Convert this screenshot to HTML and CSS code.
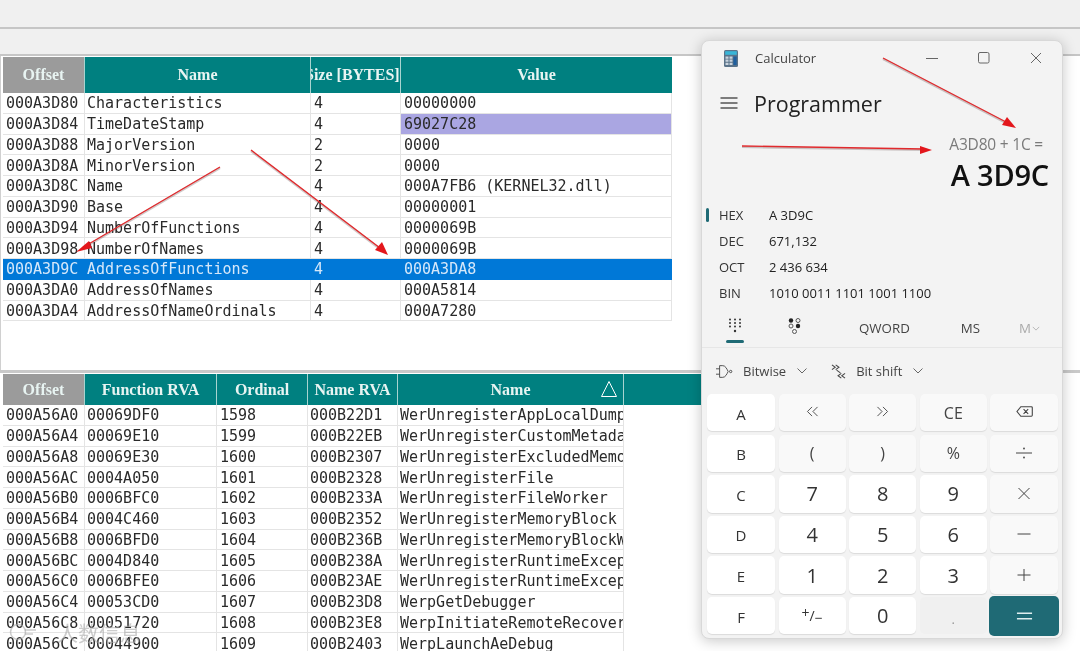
FILE: index.html
```html
<!DOCTYPE html>
<html lang="en">
<head>
<meta charset="utf-8">
<title>Export directory and Calculator</title>
<link rel="stylesheet" href="styles.css">
</head>
<body>
<div class="stage">
  <div class="bar bar-top"></div>
  <div class="bar bar-sub"></div>

  <section class="pane pane-upper">
    <table class="grid grid-upper">
      <colgroup><col class="c-off"><col class="c-name"><col class="c-size"><col class="c-val"></colgroup>
      <thead><tr><th class="th-off">Offset</th><th>Name</th><th class="th-clip"><span>Size [BYTES]</span></th><th>Value</th></tr></thead>
      <tbody>
        <tr><td>000A3D80</td><td>Characteristics</td><td>4</td><td>00000000</td></tr>
        <tr><td>000A3D84</td><td>TimeDateStamp</td><td>4</td><td class="mark">69027C28</td></tr>
        <tr><td>000A3D88</td><td>MajorVersion</td><td>2</td><td>0000</td></tr>
        <tr><td>000A3D8A</td><td>MinorVersion</td><td>2</td><td>0000</td></tr>
        <tr><td>000A3D8C</td><td>Name</td><td>4</td><td>000A7FB6 (KERNEL32.dll)</td></tr>
        <tr><td>000A3D90</td><td>Base</td><td>4</td><td>00000001</td></tr>
        <tr><td>000A3D94</td><td>NumberOfFunctions</td><td>4</td><td>0000069B</td></tr>
        <tr><td>000A3D98</td><td>NumberOfNames</td><td>4</td><td>0000069B</td></tr>
        <tr class="selected"><td>000A3D9C</td><td>AddressOfFunctions</td><td>4</td><td>000A3DA8</td></tr>
        <tr><td>000A3DA0</td><td>AddressOfNames</td><td>4</td><td>000A5814</td></tr>
        <tr><td>000A3DA4</td><td>AddressOfNameOrdinals</td><td>4</td><td>000A7280</td></tr>
      </tbody>
    </table>
  </section>

  <section class="pane pane-lower">
    <table class="grid grid-lower">
      <colgroup><col class="c-off"><col class="c-rva"><col class="c-ord"><col class="c-nrva"><col class="c-name"><col class="c-rest"></colgroup>
      <thead><tr><th class="th-off">Offset</th><th>Function RVA</th><th>Ordinal</th><th>Name RVA</th><th class="th-sort">Name<svg class="sort-icon" viewBox="0 0 18 18" aria-hidden="true"><path d="M9 1.5 1.5 16.5h15z"/></svg></th><th></th></tr></thead>
      <tbody>
        <tr><td>000A56A0</td><td>00069DF0</td><td>1598</td><td>000B22D1</td><td>WerUnregisterAppLocalDump</td><td class="blank"></td></tr>
        <tr><td>000A56A4</td><td>00069E10</td><td>1599</td><td>000B22EB</td><td>WerUnregisterCustomMetadata</td><td class="blank"></td></tr>
        <tr><td>000A56A8</td><td>00069E30</td><td>1600</td><td>000B2307</td><td>WerUnregisterExcludedMemoryBlock</td><td class="blank"></td></tr>
        <tr><td>000A56AC</td><td>0004A050</td><td>1601</td><td>000B2328</td><td>WerUnregisterFile</td><td class="blank"></td></tr>
        <tr><td>000A56B0</td><td>0006BFC0</td><td>1602</td><td>000B233A</td><td>WerUnregisterFileWorker</td><td class="blank"></td></tr>
        <tr><td>000A56B4</td><td>0004C460</td><td>1603</td><td>000B2352</td><td>WerUnregisterMemoryBlock</td><td class="blank"></td></tr>
        <tr><td>000A56B8</td><td>0006BFD0</td><td>1604</td><td>000B236B</td><td>WerUnregisterMemoryBlockWorker</td><td class="blank"></td></tr>
        <tr><td>000A56BC</td><td>0004D840</td><td>1605</td><td>000B238A</td><td>WerUnregisterRuntimeExceptionModule</td><td class="blank"></td></tr>
        <tr><td>000A56C0</td><td>0006BFE0</td><td>1606</td><td>000B23AE</td><td>WerUnregisterRuntimeExceptionModuleWorker</td><td class="blank"></td></tr>
        <tr><td>000A56C4</td><td>00053CD0</td><td>1607</td><td>000B23D8</td><td>WerpGetDebugger</td><td class="blank"></td></tr>
        <tr><td>000A56C8</td><td>00051720</td><td>1608</td><td>000B23E8</td><td>WerpInitiateRemoteRecovery</td><td class="blank"></td></tr>
        <tr><td>000A56CC</td><td>00044900</td><td>1609</td><td>000B2403</td><td>WerpLaunchAeDebug</td><td class="blank"></td></tr>
      </tbody>
    </table>
  </section>

  <div class="watermark"><svg class="wm-logo" viewBox="0 0 30 20" aria-hidden="true"><circle cx="10" cy="10" r="7.5"/><path d="M17 8h11M17 12h8"/></svg><span>人数信息</span></div>

  <aside class="calc">
    <header class="calc-title">
      <svg class="app-icon" viewBox="0 0 14 17" aria-hidden="true">
        <rect width="14" height="17" rx="1.5" fill="#5b7389"/>
        <rect x="1.2" y="1.2" width="11.6" height="3.6" fill="#38b6d8"/>
        <path d="M1.5 6.5h3v2.2h-3zM5.500 6.500h3v2.200h-3zM1.500 9.600h3v2.200h-3zM5.500 9.600h3v2.200h-3zM1.500 12.800h3V15h-3zM5.500 12.800h3V15h-3z" fill="#c9d4de"/>
        <rect x="9.4" y="6.5" width="3.2" height="8.6" fill="#1f5f9e"/>
      </svg>
      <span class="app-name">Calculator</span>
      <div class="win-btns">
        <svg viewBox="0 0 12 12" aria-hidden="true"><path d="M0 6.5h12"/></svg>
        <svg viewBox="0 0 12 12" aria-hidden="true"><rect x=".5" y=".5" width="10.5" height="10.5" rx="1.5"/></svg>
        <svg viewBox="0 0 12 12" aria-hidden="true"><path d="M1 1l10 10M11 1 1 11"/></svg>
      </div>
    </header>

    <div class="calc-mode">
      <svg class="hamburger" viewBox="0 0 18 12" aria-hidden="true"><path d="M.5 1h17M.5 6h17M.5 11h17"/></svg>
      <h1>Programmer</h1>
    </div>

    <div class="expr">A3D80 + 1C =</div>
    <div class="result">A 3D9C</div>

    <dl class="radix">
      <div class="radix-row active"><dt>HEX</dt><dd>A 3D9C</dd></div>
      <div class="radix-row"><dt>DEC</dt><dd>671,132</dd></div>
      <div class="radix-row"><dt>OCT</dt><dd>2 436 634</dd></div>
      <div class="radix-row"><dt>BIN</dt><dd>1010 0011 1101 1001 1100</dd></div>
    </dl>

    <nav class="tabs">
      <div class="tab tab-pad">
        <svg viewBox="0 0 14 16" aria-hidden="true">
          <g fill="#333"><circle cx="2" cy="1.5" r="1"/><circle cx="7" cy="1.5" r="1"/><circle cx="12" cy="1.5" r="1"/><circle cx="2" cy="5" r="1"/><circle cx="7" cy="5" r="1"/><circle cx="12" cy="5" r="1"/><circle cx="2" cy="8.5" r="1"/><circle cx="7" cy="8.5" r="1"/><circle cx="12" cy="8.5" r="1"/><circle cx="7" cy="13" r="1.2"/></g>
        </svg>
      </div>
      <div class="tab tab-bits">
        <svg viewBox="0 0 14 16" aria-hidden="true">
          <circle cx="3" cy="2.500" r="2.200" fill="#222"/><circle cx="10" cy="2.500" r="2" fill="none" stroke="#555"/>
          <circle cx="3" cy="8" r="2" fill="none" stroke="#555"/><circle cx="10" cy="8" r="2.200" fill="#222"/>
          <circle cx="6.500" cy="13.500" r="2" fill="none" stroke="#555"/>
        </svg>
      </div>
      <span class="tab tab-qword">QWORD</span>
      <span class="tab tab-ms">MS</span>
      <span class="tab tab-m">M<svg viewBox="0 0 10 6" aria-hidden="true"><path d="M1 1l4 4 4-4"/></svg></span>
    </nav>

    <div class="tools">
      <div class="tool tool-bit">
        <svg class="tool-icon" viewBox="0 0 20 16" aria-hidden="true"><path d="M0 5h4M0 11h4M4 1.500h3.500c3 0 4.500 3.500 6 6.500-1.500 3-3 6.500-6 6.500H4zM15 8a1.300 1.300 0 1 0 2.600 0 1.300 1.300 0 1 0-2.600 0z"/></svg>
        <span>Bitwise</span>
        <svg class="chev" viewBox="0 0 10 6" aria-hidden="true"><path d="M.5.5 5 5 9.500.5"/></svg>
      </div>
      <div class="tool tool-shift">
        <svg class="tool-icon" viewBox="0 0 16 16" aria-hidden="true"><path d="M1 1l3.500 2.500L1 6M5 1l3.500 2.500L5 6M11 10l-3.500 2.500L11 15M15 10l-3.500 2.500L15 15M6 6.500l4 3"/></svg>
        <span>Bit shift</span>
        <svg class="chev" viewBox="0 0 10 6" aria-hidden="true"><path d="M.5.5 5 5 9.500.5"/></svg>
      </div>
    </div>

    <div class="keys">
      <button class="key hexkey">A</button>
      <button class="key op"><svg class="glyph shift" viewBox="0 0 14 12" aria-hidden="true"><path d="M6.500 1 1.500 6l5 5M12.500 1l-5 5 5 5"/></svg></button>
      <button class="key op"><svg class="glyph shift" viewBox="0 0 14 12" aria-hidden="true"><path d="M1.500 1l5 5-5 5M7.500 1l5 5-5 5"/></svg></button>
      <button class="key op">CE</button>
      <button class="key op"><svg class="glyph bksp" viewBox="0 0 18 12" aria-hidden="true"><path d="M5 .8h11.500a1 1 0 0 1 1 1v8.400a1 1 0 0 1-1 1H5L.8 6zM8 3.500l5 5M13 3.500l-5 5"/></svg></button>

      <button class="key hexkey">B</button><button class="key op">(</button><button class="key op">)</button><button class="key op">%</button>
      <button class="key op"><svg class="glyph" viewBox="0 0 18 12" aria-hidden="true"><path d="M1 6h16"/><circle class="dot" cx="9" cy="1.500" r=".9"/><circle class="dot" cx="9" cy="10.500" r=".9"/></svg></button>

      <button class="key hexkey">C</button><button class="key num">7</button><button class="key num">8</button><button class="key num">9</button>
      <button class="key op"><svg class="glyph" viewBox="0 0 18 12" aria-hidden="true"><path d="M3.500 0l11 11M14.500 0l-11 11"/></svg></button>

      <button class="key hexkey">D</button><button class="key num">4</button><button class="key num">5</button><button class="key num">6</button>
      <button class="key op"><svg class="glyph" viewBox="0 0 18 12" aria-hidden="true"><path d="M2.500 6h13"/></svg></button>

      <button class="key hexkey">E</button><button class="key num">1</button><button class="key num">2</button><button class="key num">3</button>
      <button class="key op"><svg class="glyph" viewBox="0 0 18 12" aria-hidden="true"><path d="M2.500 6h13M9 0v12"/></svg></button>

      <button class="key hexkey">F</button><button class="key num sign"><span class="up">+</span>/<span class="down">&#8722;</span></button><button class="key num">0</button><button class="key dotkey">.</button>
      <button class="key equals"><svg class="glyph eq" viewBox="0 0 18 12" aria-hidden="true"><path d="M1 3h16M1 9h16"/></svg></button>
    </div>
  </aside>

  <svg class="arrows" viewBox="0 0 1080 651" aria-hidden="true">
    <g class="arrow-shadow">
      <path d="M220 168 87 246M251 151 380 249M883 59 1008 124M742 147 924 150"/>
    </g>
    <g class="arrow-line">
      <path d="M220 167 87 245M251 150 380 248M883 58 1008 123M742 146 924 149"/>
    </g>
    <g class="arrow-head">
      <path d="M76 252 89 241 92 248z"/>
      <path d="M388 255 375 250 382 242z"/>
      <path d="M1016 128 1002 125 1007 117z"/>
      <path d="M932 150 920 146 920 154z"/>
    </g>
  </svg>
</div>
</body>
</html>
```

FILE: styles.css
```css
* { box-sizing: border-box; }
html, body { margin: 0; padding: 0; }
body { background: #f0f0f0; overflow: hidden; }

.stage {
  position: relative;
  width: 1080px;
  height: 651px;
  overflow: hidden;
  background: #f0f0f0;
  display: flex;
  flex-direction: column;
  filter: blur(.35px);
}

.bar { flex: none; border-bottom: 2px solid #c6c6c6; }
.bar-top { height: 29px; }
.bar-sub { height: 27px; }

.pane { flex: none; background: #fff; padding-left: 3px; overflow: hidden; }
.pane-upper { height: 314px; padding-top: 1px; border-left: 1px solid #d0d0d0; padding-left: 2px; }
.pane-lower { flex: 1; border-top: 3px solid #c9c9c9; padding-top: 1px; }

.grid {
  table-layout: fixed;
  border-collapse: separate;
  border-spacing: 0;
  font-family: "DejaVu Sans Mono", monospace;
  font-size: 15px;
  color: #2a2a2a;
}
.grid-upper { width: 669px; }
.grid-lower { width: 702px; }

.c-off { width: 82px; }
.grid-upper .c-name { width: 226px; }
.c-size { width: 90px; }
.c-val { width: 271px; }
.c-rva { width: 132px; }
.c-ord { width: 91px; }
.c-nrva { width: 90px; }
.grid-lower .c-name { width: 226px; }
.c-rest { width: 81px; }

.grid th {
  height: 36px;
  padding: 0;
  background: #008080;
  color: #e8f4f2;
  font: bold 16px "Liberation Serif", serif;
  text-align: center;
  border-right: 1px solid #a8d4d0;
  overflow: hidden;
  white-space: nowrap;
}
.grid-lower th { height: 31px; }
.grid th.th-off { background: #9b9b9b; }
.grid th:last-child { border-right: 0; }
.th-clip span { display: block; width: 112px; margin-left: -6px; text-align: left; }
.th-sort { position: relative; }
.sort-icon {
  position: absolute;
  right: 5px;
  top: 6px;
  width: 18px;
  height: 18px;
  fill: none;
  stroke: #fff;
  stroke-width: 1;
}

.grid td {
  height: 20.75px;
  padding: 1px 0 0 2px;
  line-height: 18px;
  white-space: nowrap;
  overflow: hidden;
  border-right: 1px solid #e4e4e4;
  border-bottom: 1px solid #e4e4e4;
}
.grid td:first-child { padding-left: 3px; }
.grid-upper td:nth-child(n+3),
.grid-lower td:nth-child(3) { padding-left: 3px; }
.grid td.mark { background: #aaa6e2; }
.grid td.blank { border: 0; }
.selected td { background: #0078d7; color: #d5e8fa; border-color: #0078d7; }

.watermark {
  position: absolute;
  left: 8px;
  top: 617px;
  display: flex;
  align-items: center;
  gap: 8px;
  color: rgba(170, 170, 170, .6);
  font: 21px "Noto Sans CJK SC", sans-serif;
}
.watermark span { margin-left: 11px; }
.wm-logo { width: 30px; height: 20px; fill: none; stroke: rgba(170, 170, 170, .6); stroke-width: 1.5; }

/* Calculator window */
.calc {
  position: absolute;
  left: 701px;
  top: 40px;
  width: 362px;
  height: 599px;
  background: #f3f3f3;
  border: 1px solid #d8d8d8;
  border-radius: 8px;
  box-shadow: 0 2px 14px rgba(0, 0, 0, .22);
  font-family: "Open Sans", "Noto Sans", sans-serif;
  color: #1c1c1c;
  display: flex;
  flex-direction: column;
}

.calc-title {
  flex: none;
  height: 34px;
  display: flex;
  align-items: center;
  padding-left: 22px;
}
.app-icon { width: 14px; height: 17px; }
.app-name { margin-left: 17px; font-size: 13px; color: #444; }
.win-btns { margin-left: auto; display: flex; gap: 40px; padding-right: 20px; margin-top: -1px; }
.win-btns svg { width: 12px; height: 12px; fill: none; stroke: #666; stroke-width: 1; }

.calc-mode {
  flex: none;
  height: 44px;
  display: flex;
  align-items: center;
  padding-left: 18px;
  margin-top: 6px;
}
.hamburger { width: 18px; height: 12px; fill: none; stroke: #555; stroke-width: 1.3; }
.calc-mode h1 { margin: 0 0 0 16px; font-size: 21.5px; font-weight: 500; color: #222; }

.expr {
  flex: none;
  height: 22px;
  margin-top: 8px;
  padding-right: 19px;
  text-align: right;
  font-size: 15.5px;
  line-height: 22px;
  color: #7a7a7a;
  letter-spacing: -.2px;
}
.result {
  flex: none;
  height: 38px;
  margin-top: 1px;
  padding-right: 13px;
  text-align: right;
  font-size: 29px;
  line-height: 38px;
  font-weight: 600;
  color: #111;
  letter-spacing: -.2px;
}

.radix { margin: 8px 0 0; flex: none; }
.radix-row { position: relative; display: flex; height: 26px; align-items: center; padding-left: 17px; font-size: 13px; }
.radix-row dt { width: 50px; color: #333; }
.radix-row dd { margin: 0; color: #222; }
.radix-row.active::before {
  content: "";
  position: absolute;
  left: 4px;
  top: 6px;
  width: 3px;
  height: 14px;
  border-radius: 2px;
  background: #1f6a75;
}

.tabs {
  flex: none;
  height: 38px;
  margin-top: 4px;
  border-bottom: 1px solid #e6e6e6;
  display: flex;
  align-items: flex-start;
  font-size: 13.3px;
  color: #444;
}
.tab { display: block; line-height: 20px; padding-top: 8px; }
.tab-pad { position: relative; width: 60px; margin-left: 3px; height: 37px; text-align: center; padding-top: 8px; }
.tab-pad::after {
  content: "";
  position: absolute;
  left: 21px;
  bottom: 4px;
  width: 18px;
  height: 3px;
  border-radius: 2px;
  background: #1f6a75;
}
.tab svg { display: inline-block; }
.tab-pad svg, .tab-bits svg { width: 14px; height: 16px; }
.tab-bits { width: 60px; padding-top: 8px; text-align: center; }
.tab-qword { margin-left: 34px; }
.tab-ms { margin-left: 51px; }
.tab-m { margin-left: 39px; color: #aaa; }
.tab-m svg { width: 8px; height: 5px; margin-left: 1px; vertical-align: 2px; fill: none; stroke: #aaa; }

.tools {
  flex: none;
  height: 46px;
  display: flex;
  align-items: center;
  padding-left: 14px;
  font-size: 13px;
  color: #444;
}
.tool { display: flex; align-items: center; }
.tool-shift { margin-left: 24px; }
.tool-icon { width: 18px; height: 15px; fill: none; stroke: #444; stroke-width: 1; }
.tool-shift .tool-icon { width: 15px; height: 17px; stroke-width: 1.1; }
.tool span { margin-left: 9px; }
.tool-shift span { margin-left: 10px; }
.chev { width: 10px; height: 6px; margin-left: 11px; fill: none; stroke: #666; stroke-width: 1; }

.keys {
  flex: none;
  margin: 0 3px 0 5px;
  display: grid;
  grid-template-columns: 68px 67px 67px 67px 68px;
  grid-auto-rows: 37.4px;
  gap: 3.2px 3.6px;
}
.key {
  font-family: inherit;
  padding: 0;
  border: 0;
  border-radius: 5px;
  background: #fff;
  box-shadow: 0 1px 1px rgba(0, 0, 0, .1);
  color: #333;
  font-size: 17px;
  display: flex;
  align-items: center;
  justify-content: center;
}
.hexkey { font-size: 15px; padding-top: 2px; }
.op { background: #f9f9f9; font-size: 16px; color: #444; }
.num { font-size: 20px; }
.sign { font-size: 14px; }
.sign .up { transform: translateY(-3px); }
.sign .down { transform: translateY(2px); }
.dotkey { background: #f0f0f0; box-shadow: none; color: #999; font-size: 13px; padding-top: 6px; }
.equals { background: #1f6a75; margin: -1px -1px -2px; box-shadow: none; }
.glyph { width: 18px; height: 12px; fill: none; stroke: #444; stroke-width: 1; }
.glyph .dot { fill: #444; stroke: none; }
.shift { width: 13px; height: 11px; margin-bottom: 3px; }
.bksp { width: 17px; height: 11px; margin-bottom: 3px; stroke-width: 1.2; }
.eq { stroke: #dfeeef; stroke-width: 1.6; height: 12px; width: 17px; }

.arrows { position: absolute; left: 0; top: 0; width: 1080px; height: 651px; pointer-events: none; }
.arrow-shadow path { fill: none; stroke: rgba(90, 60, 60, .28); stroke-width: 2.2; }
.arrow-line path { fill: none; stroke: #e12a2d; stroke-width: 1.4; }
.arrow-head path { fill: #e3171c; }
```
